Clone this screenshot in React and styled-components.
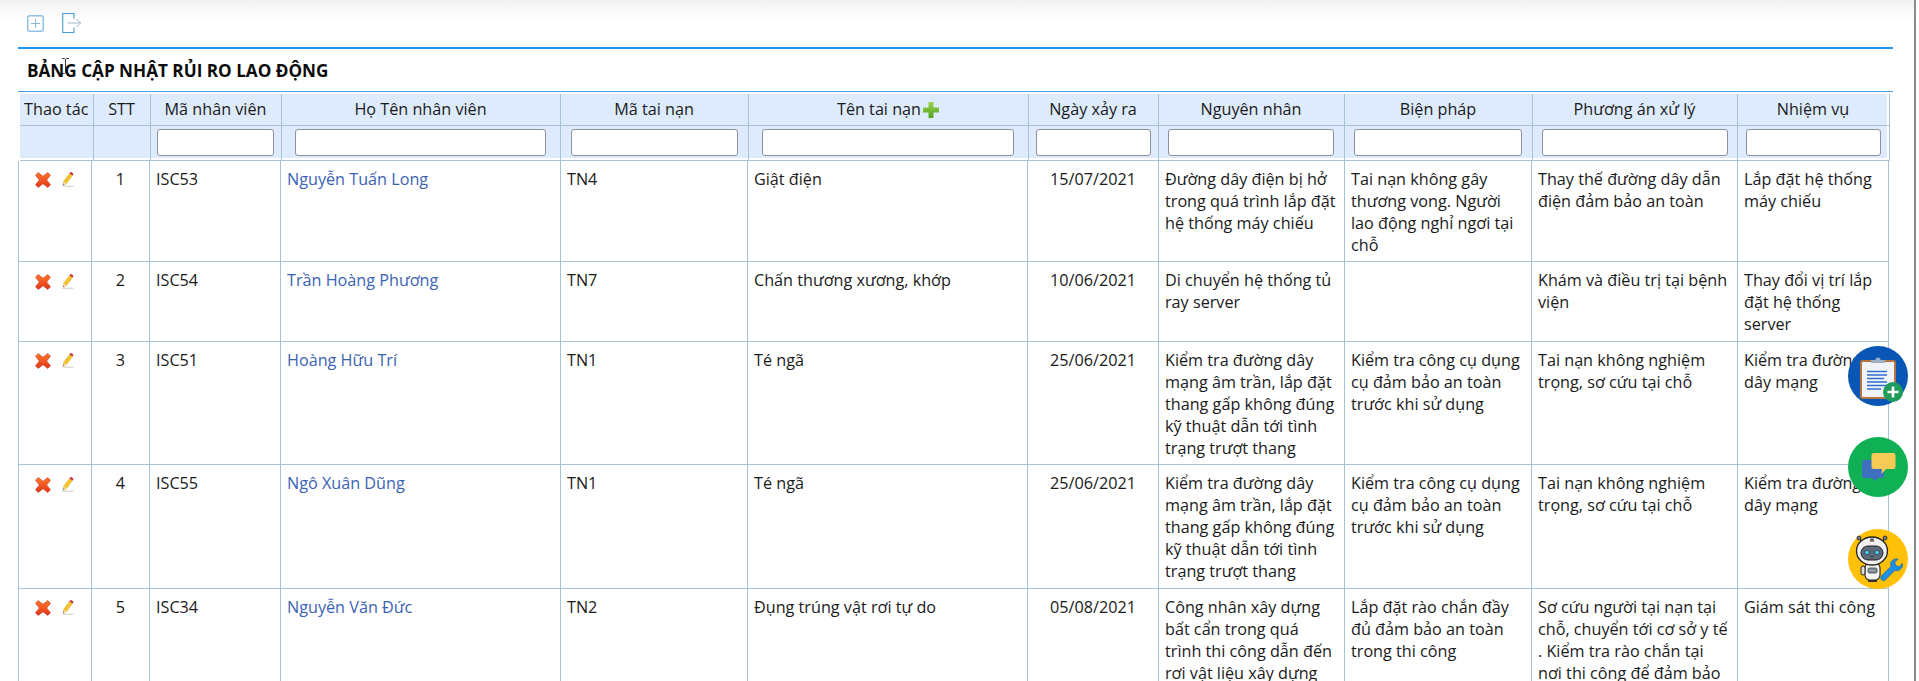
import React from "react";
import styled, { createGlobalStyle } from "styled-components";

const Global = createGlobalStyle`
  html, body { margin: 0; padding: 0; background: #fff; overflow: hidden; }
  body { font-family: "Open Sans", "Noto Sans", sans-serif; font-size: 16.2px; color: #1a1a1a; }
`;

const Page = styled.div`
  position: relative;
  box-sizing: border-box;
  width: 1916px;
  height: 681px;
  overflow: hidden;
  border-right: 2px solid #8b8b8b;
  background: #fff;
`;
const Toolbar = styled.div`
  height: 47px;
  box-sizing: border-box;
  padding: 15px 0 0 27px;
  display: flex;
  gap: 18px;
  align-items: flex-start;
  background: linear-gradient(#f0f0f0 0, #f9f9f9 10px, #fff 24px);
`;
const ToolIcon = styled.svg`
  display: block;
`;
const Rule = styled.div`
  margin-left: 18px;
  width: 1875px;
  height: 2px;
  background: #2196f3;
`;
const Title = styled.h1`
  margin: 0;
  height: 42px;
  padding-left: 27px;
  display: flex;
  align-items: center;
  font-size: 17.15px;
  font-weight: 700;
  color: #0c0c0c;
`;
const Grid = styled.div`
  margin-left: 18px;
  width: 1875px;
  border-top: 1px solid #4a9fe6;
`;
const Table = styled.table`
  width: 1870px;
  table-layout: fixed;
  border-collapse: collapse;
  border-left: 1px solid #a8c2d8;
`;
const HeadCell = styled.th`
  background: #deebfc;
  border-right: 1px solid #a8c2d8;
  border-bottom: 1px solid #a8c2d8;
  padding: 0;
  font-weight: 400;
  font-size: 16.2px;
  color: #1a1a1a;
  text-align: center;
  &:first-child { border-left: 2px solid #fff; }
  &:last-child { box-shadow: inset -2px 0 0 #fff; }
`;
const TitleRow = styled.tr`
  height: 32px;
  th { border-top: 2px solid #fff; }
`;
const FilterRow = styled.tr`
  height: 35px;
  th { vertical-align: middle; border-bottom-color: #a8c2d8; box-shadow: inset 0 -2px 0 #fff; }
  th:last-child { box-shadow: inset -2px -2px 0 #fff; }
`;
const FilterInput = styled.input`
  box-sizing: border-box;
  display: block;
  margin: 0 auto;
  width: ${(p) => p.$w}px;
  height: 27px;
  border: 1px solid #8f8f9d;
  border-radius: 3px;
  background: #fff;
  padding: 0 4px;
`;
const Cell = styled.td`
  padding: 7px 6px 5.6px;
  border-right: 1px solid #a8c2d8;
  border-bottom: 1px solid #a8c2d8;
  vertical-align: top;
  font-size: 16.2px;
  line-height: 22px;
  color: #1a1a1a;
  text-align: ${(p) => p.$align || "left"};
  word-wrap: break-word;
`;
const ActionCell = styled(Cell)`
  padding-top: 11.5px;
  padding-bottom: 0;
`;
const Actions = styled.div`
  display: flex;
  gap: 11px;
  padding-left: 10px;
`;
const NameLink = styled.a`
  color: #3a62b4;
  text-decoration: none;
`;
const Floating = styled.button`
  position: absolute;
  right: 6px;
  top: ${(p) => p.$top}px;
  width: 60px;
  height: 60px;
  border: 0;
  padding: 0;
  border-radius: 50%;
  background: ${(p) => p.$bg};
`;
const Beam = styled.svg`
  position: absolute;
  left: 61px;
  top: 58px;
`;

const headCols = [74, 57, 131, 279, 188, 280, 130, 186, 188, 205, 152];
const bodyCols = [73, 58, 131, 280, 187, 280, 131, 186, 187, 206, 151];
const filterWidths = [0, 0, 117, 251, 167, 252, 115, 166, 168, 186, 135];

const heads = [
  "Thao tác", "STT", "Mã nhân viên", "Họ Tên nhân viên", "Mã tai nạn", "Tên tai nạn",
  "Ngày xảy ra", "Nguyên nhân", "Biện pháp", "Phương án xử lý", "Nhiệm vụ",
];

const fallCause = "Kiểm tra đường dây mạng âm trần, lắp đặt thang gấp không đúng kỹ thuật dẫn tới tình trạng trượt thang";
const fallFix = "Kiểm tra công cụ dụng cụ đảm bảo an toàn trước khi sử dụng";
const fallPlan = "Tai nạn không nghiệm trọng, sơ cứu tại chỗ";

const rows = [
  { no: 1, code: "ISC53", name: "Nguyễn Tuấn Long", tn: "TN4", acc: "Giật điện", date: "15/07/2021",
    cause: "Đường dây điện bị hở trong quá trình lắp đặt hệ thống máy chiếu",
    fix: "Tai nạn không gây thương vong. Người lao động nghỉ ngơi tại chỗ",
    plan: "Thay thế đường dây dẫn điện đảm bảo an toàn", task: "Lắp đặt hệ thống máy chiếu" },
  { no: 2, code: "ISC54", name: "Trần Hoàng Phương", tn: "TN7", acc: "Chấn thương xương, khớp", date: "10/06/2021",
    cause: "Di chuyển hệ thống tủ ray server", fix: "",
    plan: "Khám và điều trị tại bệnh viện", task: "Thay đổi vị trí lắp đặt hệ thống server" },
  { no: 3, code: "ISC51", name: "Hoàng Hữu Trí", tn: "TN1", acc: "Té ngã", date: "25/06/2021",
    cause: fallCause, fix: fallFix, plan: fallPlan, task: "Kiểm tra đường dây mạng" },
  { no: 4, code: "ISC55", name: "Ngô Xuân Dũng", tn: "TN1", acc: "Té ngã", date: "25/06/2021",
    cause: fallCause, fix: fallFix, plan: fallPlan, task: "Kiểm tra đường dây mạng" },
  { no: 5, code: "ISC34", name: "Nguyễn Văn Đức", tn: "TN2", acc: "Đụng trúng vật rơi tự do", date: "05/08/2021",
    cause: "Công nhân xây dựng bất cẩn trong quá trình thi công dẫn đến rơi vật liệu xây dựng",
    fix: "Lắp đặt rào chắn đầy đủ đảm bảo an toàn trong thi công",
    plan: "Sơ cứu người tại nạn tại chỗ, chuyển tới cơ sở y tế . Kiểm tra rào chắn tại nơi thi công để đảm bảo an toàn",
    task: "Giám sát thi công" },
];

const AddBoxIcon = () => (
  <ToolIcon width="17" height="17" viewBox="0 0 17 17" fill="none">
    <rect x="0.75" y="0.75" width="15.5" height="15.5" rx="2" stroke="#93bfe0" strokeWidth="1.5" />
    <path d="M8.5 4v9M4 8.5h9" stroke="#8fb4d0" strokeWidth="1" />
  </ToolIcon>
);
const ExitIcon = () => (
  <ToolIcon width="20" height="20" viewBox="0 0 20 20" fill="none" style={{ marginTop: -2 }}>
    <path d="M12 5.5V.5H.7v19H12v-5" stroke="#4a9bd6" strokeWidth="1.1" />
    <path d="M5.5 10h13M14.5 6l4 4-4 4" stroke="#9bb8cc" strokeWidth="1" />
  </ToolIcon>
);
const PlusIcon = () => (
  <svg width="16" height="16" viewBox="0 0 16 16" style={{ verticalAlign: -3, marginLeft: 2 }}>
    <defs>
      <linearGradient id="gp" x1="0" y1="0" x2="0" y2="1">
        <stop offset="0" stopColor="#9ed24e" />
        <stop offset="1" stopColor="#4ea41f" />
      </linearGradient>
    </defs>
    <path d="M5.5 0h5v5.5H16v5h-5.5V16h-5v-5.5H0v-5h5.5z" fill="url(#gp)" />
  </svg>
);
const DeleteIcon = () => (
  <svg width="16" height="16" viewBox="0 0 15 15" style={{ display: "block" }}>
    <defs>
      <linearGradient id="gx" x1="0" y1="0" x2="0" y2="1">
        <stop offset="0" stopColor="#ff7a2a" />
        <stop offset="1" stopColor="#e2341a" />
      </linearGradient>
    </defs>
    <path d="M3 .5l4.500 3.600L12 .5 14.500 3 10.900 7.500l3.600 4.500-2.500 2.500-4.500-3.600L3 14.500.5 12l3.600-4.500L.5 3z" fill="url(#gx)" stroke="#c9351c" strokeWidth=".6" />
  </svg>
);
const EditIcon = () => (
  <svg width="12" height="16" viewBox="0 0 12 16" style={{ display: "block", marginTop: -1 }}>
    <path d="M0 14.5h11.5V16H0z" fill="#dcdcd4" />
    <path d="M1.5 10.5L7.5 2.5l3 2-6 8-3 1.5z" fill="#f4c430" stroke="#d9a520" strokeWidth=".5" />
    <path d="M7.5 2.5L8.8.8l2.8 2-1.1 1.7z" fill="#c8303a" />
    <path d="M1.5 10.5L1 14l3.4-1.6z" fill="#f3dfae" />
    <path d="M1 14l.3-1.5 1 .8z" fill="#333" />
  </svg>
);
const ClipboardIcon = () => (
  <svg width="60" height="60" viewBox="0 0 60 60">
    <rect x="13" y="15" width="34" height="37" rx="1.5" fill="#f1f3f8" stroke="#b4743f" strokeWidth="2" />
    <path d="M23 17v-3h4.5a2.5 2.5 0 0 1 5 0H37v3z" fill="#9fb0c3" />
    <path d="M19 25.5h20M19 29h20M19 32.5h17M19 36h20M19 39.5h20M19 43h14" stroke="#2f6fd0" strokeWidth="1.7" />
    <circle cx="45" cy="46" r="10" fill="#1f9d5a" />
    <path d="M45 40.5v11M39.5 46h11" stroke="#fff" strokeWidth="2.6" />
  </svg>
);
const ChatIcon = () => (
  <svg width="60" height="60" viewBox="0 0 60 60">
    <path d="M16 23h18a2 2 0 0 1 2 2v14a2 2 0 0 1-2 2h-5l-1 3-5-3h-7a2 2 0 0 1-2-2V25a2 2 0 0 1 2-2z" fill="#3f6fbf" />
    <path d="M26 16h19a2.5 2.5 0 0 1 2.500 2.500v11a2.500 2.500 0 0 1-2.500 2.500h-7l-4.500 5 .5-5h-8a2.500 2.500 0 0 1-2.500-2.500v-11A2.500 2.500 0 0 1 26 16z" fill="#f8cb56" />
  </svg>
);
const RobotIcon = () => (
  <svg width="60" height="60" viewBox="0 0 60 60">
    <path d="M11 9l3 4M37 9l-3 4" stroke="#222" strokeWidth="1.300" />
    <circle cx="11" cy="9" r="2" fill="#6b7885" stroke="#222" strokeWidth=".8" />
    <circle cx="37" cy="9" r="2" fill="#6b7885" stroke="#222" strokeWidth=".8" />
    <rect x="17" y="34" width="15" height="17" rx="5" fill="#f4f4f4" stroke="#222" strokeWidth="1.100" />
    <rect x="20" y="39" width="9" height="5" rx="1.500" fill="#8b96a1" stroke="#222" strokeWidth=".7" />
    <rect x="13" y="37" width="4" height="9" rx="2" fill="#ddd" stroke="#222" strokeWidth="1" />
    <path d="M20 51h9v2h-9z" fill="#333" />
    <ellipse cx="24" cy="22" rx="15.500" ry="14" fill="#f2f2f2" stroke="#222" strokeWidth="1.300" />
    <path d="M22.500 9.500h3l.8 3h-4.600z" fill="#555" />
    <rect x="13" y="17" width="22" height="14" rx="7" fill="#5c6a79" stroke="#222" strokeWidth="1" />
    <circle cx="19" cy="23.500" r="2.200" fill="#4fd0f0" stroke="#1b2a36" strokeWidth=".6" />
    <circle cx="29" cy="23.500" r="2.200" fill="#4fd0f0" stroke="#1b2a36" strokeWidth=".6" />
    <path d="M22.500 27c1 1 2 1 3 0" stroke="#1b2a36" strokeWidth=".8" fill="none" />
    <path d="M46 30l-3.500 3.500.3 4-9.300 9.300a2.800 2.800 0 0 0 4 4l9.300-9.300 4 .3 3.500-3.500.2-4-3.500 3.300-3.300-1-.8-3.300 3.300-3.300z" fill="#1e8fe6" stroke="#10558f" strokeWidth=".5" />
  </svg>
);

const Columns = ({ widths }) => (
  <colgroup>
    {widths.map((w, i) => <col key={i} width={w} />)}
  </colgroup>
);

export default function App() {
  return (
    <Page>
      <Global />
      <Toolbar>
        <AddBoxIcon />
        <ExitIcon />
      </Toolbar>
      <Rule />
      <Title>BẢNG CẬP NHẬT RỦI RO LAO ĐỘNG</Title>
      <Grid>
        <Table>
          <Columns widths={headCols} />
          <thead>
            <TitleRow>
              {heads.map((h, i) => (
                <HeadCell key={h}>
                  {h}
                  {i === 5 && <PlusIcon />}
                </HeadCell>
              ))}
            </TitleRow>
            <FilterRow>
              {filterWidths.map((w, i) => (
                <HeadCell key={i}>{w > 0 && <FilterInput $w={w} />}</HeadCell>
              ))}
            </FilterRow>
          </thead>
        </Table>
        <Table>
          <Columns widths={bodyCols} />
          <tbody>
            {rows.map((r) => (
              <tr key={r.no}>
                <ActionCell>
                  <Actions>
                    <DeleteIcon />
                    <EditIcon />
                  </Actions>
                </ActionCell>
                <Cell $align="center">{r.no}</Cell>
                <Cell>{r.code}</Cell>
                <Cell><NameLink href="#">{r.name}</NameLink></Cell>
                <Cell>{r.tn}</Cell>
                <Cell>{r.acc}</Cell>
                <Cell $align="center">{r.date}</Cell>
                <Cell>{r.cause}</Cell>
                <Cell>{r.fix}</Cell>
                <Cell>{r.plan}</Cell>
                <Cell>{r.task}</Cell>
              </tr>
            ))}
          </tbody>
        </Table>
      </Grid>
      <Floating $top={346} $bg="#0a56b4" aria-label="Thêm"><ClipboardIcon /></Floating>
      <Floating $top={437} $bg="#10b154" aria-label="Trò chuyện"><ChatIcon /></Floating>
      <Floating $top={529} $bg="#ffc107" aria-label="Trợ lý"><RobotIcon /></Floating>
      <Beam width="9" height="16" viewBox="0 0 9 16" fill="none">
        <path d="M1 .5h2.500L4.500 1.500 5.500.5H8M4.500 1.500v13M1 15.500h2.500l1-1 1 1H8" stroke="#222" strokeWidth=".9" />
      </Beam>
    </Page>
  );
}
